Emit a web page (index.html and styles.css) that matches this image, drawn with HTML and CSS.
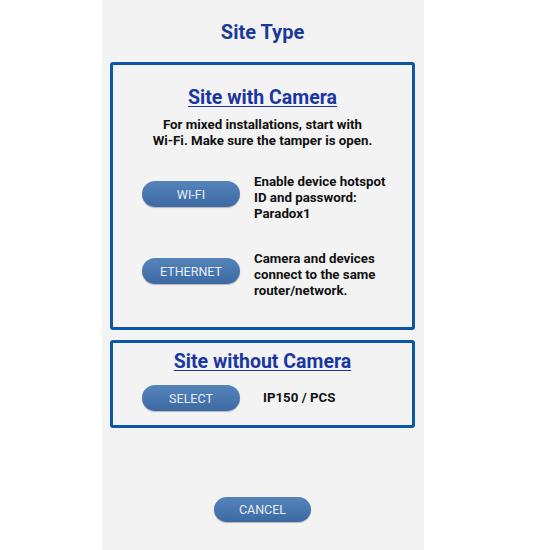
FILE: index.html
```html
<!DOCTYPE html>
<html lang="en">
<head>
    <meta charset="UTF-8">
    <meta name="viewport" content="width=device-width, initial-scale=1.0">
    <title>Site Type</title>
    <link rel="stylesheet" href="styles.css">
</head>
<body>
    <div class="screen">
        <h1 class="page-title">Site Type</h1>

        <div class="site-box camera-box">
            <h2 class="box-title">Site with Camera</h2>
            <p class="intro">For mixed installations, start with<br>Wi-Fi. Make sure the tamper is open.</p>

            <div class="option-row">
                <button class="pill-btn">WI-FI</button>
                <p class="option-text">Enable device hotspot<br>ID and password:<br>Paradox1</p>
            </div>

            <div class="option-row">
                <button class="pill-btn">ETHERNET</button>
                <p class="option-text">Camera and devices<br>connect to the same<br>router/network.</p>
            </div>
        </div>

        <div class="site-box plain-box">
            <h2 class="box-title">Site without Camera</h2>
            <div class="option-row select-row">
                <button class="pill-btn">SELECT</button>
                <p class="option-text single">IP150 / PCS</p>
            </div>
        </div>

        <div class="footer">
            <button class="pill-btn">CANCEL</button>
        </div>
    </div>
</body>
</html>
```

FILE: styles.css
```css
body {
    margin: 0;
    background: #fff;
    font-family: Roboto, "Liberation Sans", Arial, sans-serif;
}
.screen {
    margin-left: 102px;
    width: 322px;
    height: 550px;
    background: #f3f3f3;
    padding: 20px 9px 0 8px;
    box-sizing: border-box;
    display: flex;
    flex-direction: column;
}
.page-title {
    margin: 0 0 18px;
    font-size: 20px;
    line-height: 24px;
    font-weight: bold;
    text-align: center;
    color: #1b3a9c;
}
.site-box {
    border: 3px solid #0b57a6;
    border-radius: 3px;
    box-sizing: border-box;
}
.camera-box {
    height: 268px;
    padding: 21px 0 0 29px;
}
.plain-box {
    margin-top: 10px;
    height: 88px;
    padding: 7px 0 0 29px;
}
.box-title {
    margin: 0 0 0 -29px;
    font-size: 19.5px;
    line-height: 24px;
    font-weight: bold;
    text-align: center;
    color: #1a36a2;
    text-decoration: underline;
    text-underline-offset: 2px;
}
.intro {
    margin: 7px 0 25px -29px;
    font-size: 13.3px;
    line-height: 16px;
    font-weight: bold;
    text-align: center;
    color: #111;
}
.option-row {
    display: flex;
    align-items: flex-start;
    gap: 14px;
    margin-bottom: 29px;
}
.option-row .pill-btn {
    margin-top: 7px;
}
.option-text {
    margin: 0;
    font-size: 13.3px;
    line-height: 16px;
    font-weight: bold;
    color: #111;
}
.select-row {
    margin-top: 11px;
    align-items: center;
    gap: 23px;
}
.select-row .pill-btn {
    margin-top: 0;
}
.pill-btn {
    width: 98px;
    height: 26px;
    padding: 0;
    border: none;
    border-radius: 13px;
    background: linear-gradient(#5584bb, #3c69a2);
    box-shadow: 0 1px 1px rgba(0, 0, 0, 0.25);
    color: #e8eef7;
    font-family: Roboto, "Liberation Sans", Arial, sans-serif;
    font-size: 12.5px;
    flex-shrink: 0;
}
.footer {
    margin-top: auto;
    padding-bottom: 28px;
    display: flex;
    justify-content: center;
}
.footer .pill-btn {
    width: 97px;
    height: 25px;
}
```
